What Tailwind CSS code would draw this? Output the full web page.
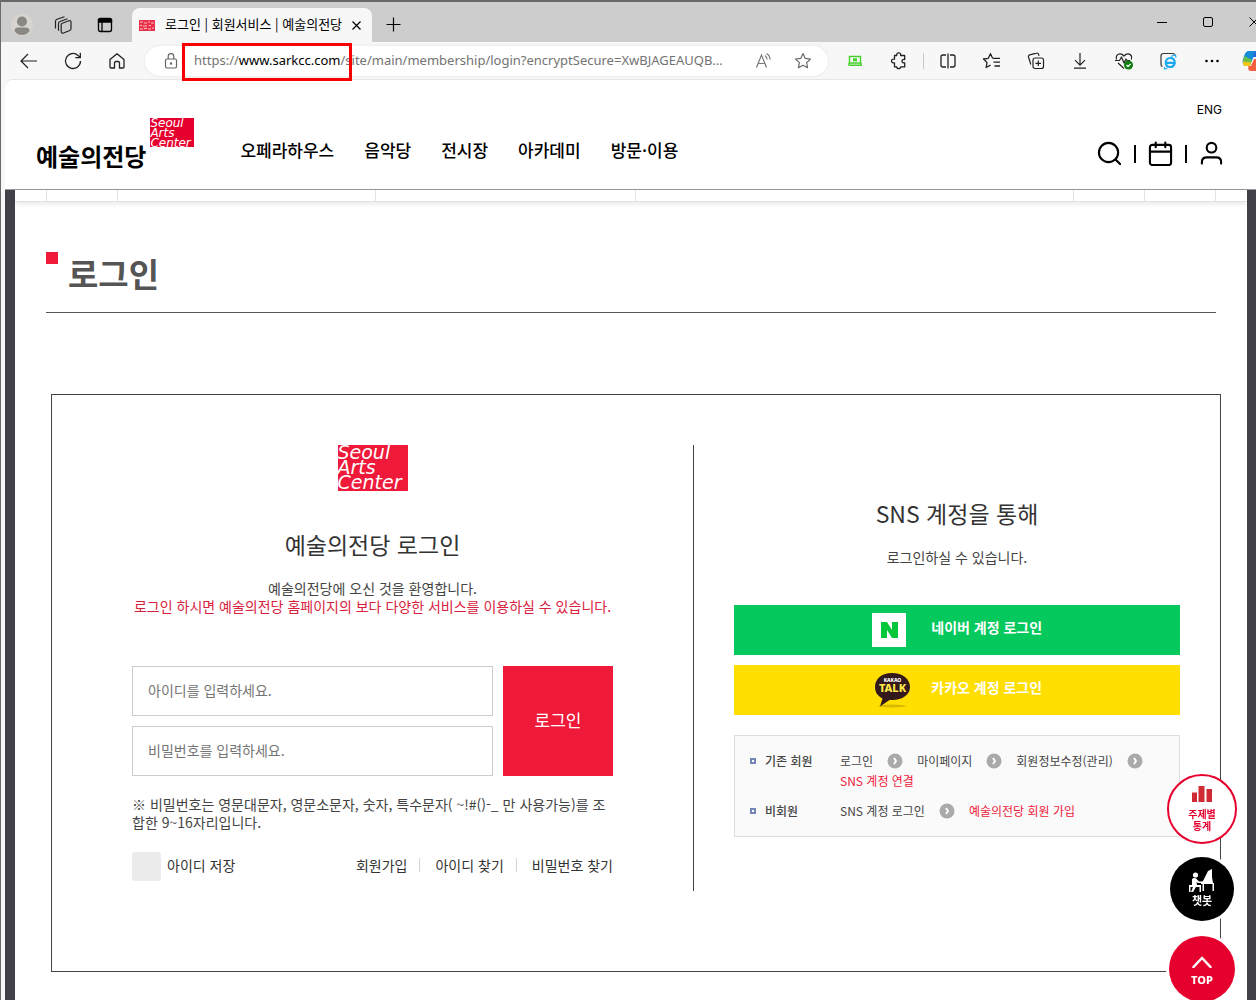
<!DOCTYPE html>
<html lang="ko">
<head>
<meta charset="utf-8">
<meta name="viewport" content="width=device-width, initial-scale=1">
<title>로그인 | 회원서비스 | 예술의전당</title>
<script src="https://cdn.jsdelivr.net/npm/@tailwindcss/browser@4"></script>
</head>
<body class="flex min-h-screen flex-col overflow-x-hidden border-l border-[#6b6b6b] bg-[#f7f7f7] font-['Noto_Sans_CJK_KR',sans-serif] text-[#333]">

<!-- Browser tab strip -->
<div class="flex h-[42px] shrink-0 items-end border-t-2 border-[#666b66] bg-[#cdcdcd] text-black">
  <div class="flex h-[34px] w-[131px] shrink-0 items-center gap-5 pl-[10px]">
    <svg class="size-[22px]" viewBox="0 0 22 22"><circle cx="11" cy="11" r="11" fill="#d8d5d0"/><circle cx="11" cy="7.500" r="5" fill="#8b8783"/><path d="M3.500 17c0-3 2-3.500 4-3.500h7c2 0 4 .5 4 3.500-2 3-5 4-7.500 4s-5.500-1-7.500-4z" fill="#8b8783"/></svg>
    <svg class="size-5" viewBox="0 0 20 20" fill="none" stroke="#222" stroke-width="1.200" stroke-linejoin="round"><path d="M9.200 8.200l6.800-2.500c1-.3 2 .3 2 1.300v6.500c0 1-.5 1.700-1.300 2L10.500 18c-1.200.4-2.300-.2-2.300-1.400v-7c0-.7.4-1.200 1-1.400zM5.500 15.800V8.500c0-1 .6-1.700 1.500-2l7.500-2.800M2.500 13.500V6.300c0-1 .6-1.700 1.500-2L11.500 1.800"/></svg>
    <svg class="ml-[2px] size-5" viewBox="0 0 20 20" fill="none" stroke="#000" stroke-width="1.300"><rect x="3.500" y="3.500" width="13" height="13" rx="2"/><path d="M3.500 4.500h13v2.500h-13z" fill="#000"/><path d="M7 7v9.500"/></svg>
  </div>
  <div class="flex h-[34px] w-60 shrink-0 items-center rounded-t-lg bg-[#f7f7f7] pr-[10px] pl-[7px]">
    <svg class="h-[11px] w-4 shrink-0" viewBox="0 0 16 11"><rect width="16" height="11" fill="#e93048"/><path d="M1 2h3M5 3h3M9 2h2M12 3h3M1 5.500h2M4 6h4M10 5.500h2M1 9h3M5 8.500h3M9 9h3M13 8h2" stroke="#fff" stroke-opacity=".7"/></svg>
    <span class="ml-[10px] flex-1 pb-[2px] text-[13px] whitespace-nowrap">로그인 | 회원서비스 | 예술의전당</span>
    <button aria-label="탭 닫기"><svg class="size-[11px]" viewBox="0 0 11 11" stroke="#000" stroke-width="1.200"><path d="M1.500 1.500l8 8M9.500 1.500l-8 8"/></svg></button>
  </div>
  <button aria-label="새 탭" class="mb-[10px] ml-[14px]"><svg class="size-[15px]" viewBox="0 0 15 15" stroke="#000" stroke-width="1.200"><path d="M.5 7.500h14M7.500.5v14"/></svg></button>
  <div class="-mr-1 mb-[14px] ml-auto flex shrink-0 items-center gap-[34px]">
    <button aria-label="최소화"><svg class="size-3" viewBox="0 0 12 12"><path d="M1 6.500h10" stroke="#000"/></svg></button>
    <button aria-label="최대화"><svg class="size-3" viewBox="0 0 12 12"><rect x="1.500" y="1.500" width="9" height="9" rx="1.500" fill="none" stroke="#000"/></svg></button>
    <button aria-label="닫기"><svg class="size-3" viewBox="0 0 12 12" stroke="#000"><path d="M1.500 1.500l9 9M10.500 1.500l-9 9"/></svg></button>
  </div>
</div>

<!-- Address bar -->
<div class="flex h-[37px] shrink-0 items-center text-[#222]">
  <div class="flex w-36 shrink-0 items-center gap-6 pl-[18px]">
    <button aria-label="뒤로"><svg class="size-5" viewBox="0 0 20 20" fill="none" stroke="#222" stroke-width="1.200"><path d="M18 10H2.500M9 3l-7 7 7 7"/></svg></button>
    <button aria-label="새로 고침"><svg class="size-5" viewBox="0 0 20 20" fill="none" stroke="#222" stroke-width="1.300"><path d="M17.500 10a7.500 7.500 0 1 1-2.500-5.600L17 6.500M17.300 1.800v4.900h-5"/></svg></button>
    <button aria-label="홈"><svg class="size-5" viewBox="0 0 20 20" fill="none" stroke="#222" stroke-width="1.300" stroke-linejoin="round"><path d="M3 8.500L10 2.800l7 5.700v7.500c0 .6-.4 1-1 1h-3.500v-5c0-1-.6-1.500-1.500-1.500H9c-.9 0-1.500.5-1.500 1.500v5H4c-.6 0-1-.4-1-1z"/></svg></button>
  </div>
  <div class="relative flex h-[30px] w-[683px] shrink-0 items-center rounded-full bg-white pr-4 pl-[18px] shadow-[0_0_3px_#00000018]">
    <svg class="h-4 w-4 shrink-0" viewBox="0 0 16 16" fill="none" stroke="#666" stroke-width="1.200"><rect x="2.500" y="6" width="11" height="9" rx="1.500"/><path d="M5.200 6V3.500a2.800 2.800 0 0 1 5.600 0V6"/><circle cx="8" cy="10.500" r=".6" fill="#666"/></svg>
    <span class="ml-[15px] flex-1 font-['Noto_Sans',sans-serif] text-[13px] whitespace-nowrap text-[#737373]">https://<span class="text-black">www.sarkcc.com</span>/site/main/membership/login?encryptSecure=XwBJAGEAUQB...</span>
    <button aria-label="소리내어 읽기"><svg class="size-[18px]" viewBox="0 0 18 18" fill="none" stroke="#777" stroke-width="1.200"><path d="M1.500 15.500L6.500 3l5 12.500M3.200 11.500h6.600M10 3.500c1.500 1 2 2.200 2 4M11.500 1.500c2.500 1.500 3.500 3.500 3.500 6"/></svg></button>
    <button aria-label="즐겨찾기에 추가" class="ml-[21px]"><svg class="size-[18px]" viewBox="0 0 20 20" fill="none" stroke="#666" stroke-width="1.300" stroke-linejoin="round"><path d="M10 1.800l2.500 5.300 5.800.7-4.300 4 1.100 5.700L10 14.700l-5.100 2.800L6 11.800l-4.300-4 5.800-.7z"/></svg></button>
    <div class="absolute -top-[3px] left-[37px] h-[38px] w-[170px] border-[3px] border-[#f80000]"></div>
  </div>
  <div class="ml-[17px] flex shrink-0 items-center">
    <button aria-label="화면 캡처" class="mr-6"><svg class="size-5" viewBox="0 0 20 20" fill="none" stroke="#45d02c" stroke-width="1.400"><path d="M4.500 5.500h11v6.500h-11zM3.800 14.300h12.400V12M3.800 14.300V12"/><path d="M8 7.300h4v3H8z" fill="#45d02c" stroke="none"/></svg></button>
    <button aria-label="확장" class="mr-[14px]"><svg class="size-5" viewBox="0 0 20 20" fill="none" stroke="#222" stroke-width="1.300" stroke-linejoin="round"><path d="M5.500 4.500h2.200c-.2-2 .8-2.700 2-2.700s2.200.7 2 2.700h4v4c-2-.3-2.700.6-2.700 1.700s.7 2 2.700 1.700v4h-4c.2 1-.8 1.700-2 1.700s-2.200-.7-2-1.700H5.500v-4C3.500 12 2.500 11.300 2.500 10s1-2 3-1.800z"/></svg></button>
    <span class="mr-[14px] h-4 w-px bg-[#c8c8c8]"></span>
    <button aria-label="분할 화면" class="mr-6"><svg class="size-5" viewBox="0 0 20 20" fill="none" stroke="#222" stroke-width="1.300"><path d="M8 4H5a2 2 0 0 0-2 2v8c0 1.100.9 2 2 2h3M12 4h3a2 2 0 0 1 2 2v8a2 2 0 0 1-2 2h-3M10 2.500v15"/></svg></button>
    <button aria-label="즐겨찾기" class="mr-6"><svg class="size-5" viewBox="0 0 20 20" fill="none" stroke="#222" stroke-width="1.300" stroke-linejoin="round"><path d="M10.500 7L8.500 2.700 6.300 7.300l-4.800.7L5 11.500l-.9 5 4.400-2.300M10.500 7.300h7.500M11.500 11.200H18M12.500 15H18"/></svg></button>
    <button aria-label="컬렉션" class="mr-6"><svg class="size-5" viewBox="0 0 20 20" fill="none" stroke="#222" stroke-width="1.200"><rect x="7" y="7" width="10.500" height="10.500" rx="2"/><path d="M12.300 9.500v5.500M9.500 12.300h5.500M4.800 13.500L2.500 6c-.3-1 .2-1.800 1.200-2.100l6.800-1.800c1-.3 1.700.1 2 1l.5 1.700"/></svg></button>
    <button aria-label="다운로드" class="mr-6"><svg class="size-5" viewBox="0 0 20 20" fill="none" stroke="#222" stroke-width="1.200"><path d="M10 2v12M5 9.200l5 5 5-5M4 17.200h12"/></svg></button>
    <button aria-label="브라우저 필수 사항" class="mr-6"><svg class="size-5" viewBox="0 0 20 20" fill="none" stroke="#222" stroke-width="1.200" stroke-linejoin="round"><path d="M2.500 8.500C1.500 5 3.500 2.800 6 2.800c1.800 0 3 1 4 2.200 1-1.200 2.200-2.200 4-2.200 3 0 4.500 3 3.300 5.700M1 9.500h4.500l2-3.500 2.500 6 2-4 1 1.500h3M4 12l6 5.500"/><circle cx="14.500" cy="14" r="4.500" fill="#107c10" stroke="none"/><path d="M12.500 14l1.500 1.500 2.700-2.700" stroke="#fff"/></svg></button>
    <button aria-label="IE 모드" class="mr-6"><svg class="size-5" viewBox="0 0 20 20" fill="none"><path d="M4.500 15.500c-1.300 0-1.500-1-1.500-2V5c0-1.500.8-2.500 2.500-2.500h9c1.500 0 2.500.8 2.500 2" stroke="#333" stroke-width="1.200"/><path d="M16.500 12.800c-.7 2-2.200 3.200-4.200 3.200-2.800 0-4.500-1.900-4.500-4.500s1.800-4.500 4.500-4.500 4.400 1.900 4.400 4.800H8" stroke="#1eaaf1" stroke-width="2.200"/><path d="M7 16c-2 2.500 0 2.500 2.500 1M13 5.500c3-2 5.500-2 4.700 1" stroke="#1eaaf1" stroke-width="1.200"/></svg></button>
    <button aria-label="더 보기" class="mr-5"><svg class="size-5" viewBox="0 0 20 20"><circle cx="4.500" cy="10" r="1.300"/><circle cx="10" cy="10" r="1.300"/><circle cx="15.500" cy="10" r="1.300"/></svg></button>
    <button aria-label="Copilot"><svg class="h-5 w-6" viewBox="0 0 24 20"><path d="M7 0h8l-3 5-4 9H4c-4 0-4-3-2.500-7C3 2 4 0 7 0z" fill="#168bd8"/><path d="M2.500 5L10 9l-2 6H4c-4 0-3.500-4-1.500-10z" fill="#6abf4b"/><path d="M1 10.500l8 1L8 15H4c-2.500 0-3.500-2-3-4.500z" fill="#f5c518"/><path d="M12 8h6l-4 12H9c-3 0-3-2-2.500-5H9z" fill="#f2603f"/><path d="M13 0h2c3 0 3 4 4 6h-8z" fill="#2467d6"/></svg></button>
  </div>
</div>

<!-- Page viewport -->
<div class="ml-1 flex flex-1 flex-col rounded-tl-lg border-t border-[#e6e6e6] bg-white">
  <header class="flex h-[110px] shrink-0 border-b border-[#999] text-black">
    <a href="#" aria-label="예술의전당 홈" class="mt-[38px] ml-[31px] flex shrink-0 items-start">
      <span class="mt-6 text-2xl leading-7 font-bold">예술의전당</span>
      <span class="ml-1 h-[29px] w-11 overflow-hidden bg-[#e6002d] font-['DejaVu_Sans',sans-serif] text-xs leading-[10px] text-white italic">Seoul<br>Arts<br>Center</span>
    </a>
    <nav class="mt-[58px] ml-[46px] flex items-start gap-[30px] text-[17px] leading-6 font-medium whitespace-nowrap">
      <a href="#">오페라하우스</a><a href="#">음악당</a><a href="#">전시장</a><a href="#">아카데미</a><a href="#">방문·이용</a>
    </nav>
    <div class="mr-8 ml-auto flex flex-col items-end pt-[22px]">
      <a href="#" class="mr-[2px] font-[Inter,sans-serif] text-xs leading-4">ENG</a>
      <div class="mt-[23px] flex items-center gap-3">
        <button aria-label="검색"><svg class="size-[25px]" viewBox="0 0 26 26" fill="none" stroke="#000" stroke-width="2.200" stroke-linecap="round"><circle cx="12" cy="12" r="10"/><path d="M19.500 19.500l4.500 4.500"/></svg></button>
        <span class="h-[18px] w-[2px] bg-black"></span>
        <button aria-label="일정"><svg class="size-[25px]" viewBox="0 0 26 26" fill="none" stroke="#000" stroke-width="2.200" stroke-linecap="round"><rect x="2" y="4" width="22" height="21" rx="2.500"/><path d="M2 11h22M8 1.500v5M18 1.500v5"/></svg></button>
        <span class="h-[18px] w-[2px] bg-black"></span>
        <button aria-label="내 정보"><svg class="size-[25px]" viewBox="0 0 26 26" fill="none" stroke="#000" stroke-width="2.200" stroke-linecap="round"><circle cx="13" cy="7" r="5"/><path d="M3 23.500V22c0-3 2-5 5-5h10c3 0 5 2 5 5v1.500"/></svg></button>
      </div>
    </div>
  </header>

  <div class="flex flex-1 flex-col border-r-[9px] border-l-[10px] border-[#424149]">
    <div class="flex h-3 shrink-0 border-b border-[#e2e2e2] px-[31px] shadow-[0_2px_5px_#00000018]">
      <span class="w-[71px] border-l border-[#e2e2e2]"></span>
      <span class="w-[258px] border-l border-[#e2e2e2]"></span>
      <span class="w-[260px] border-l border-[#e2e2e2]"></span>
      <span class="flex-1 border-l border-[#e2e2e2]"></span>
      <span class="w-[71px] border-l border-[#e2e2e2]"></span>
      <span class="w-[72px] border-x border-[#e2e2e2]"></span>
    </div>

    <main class="mx-[31px]">
      <div class="mt-[50px] flex h-[61px] items-start gap-[10px] border-b border-[#555]">
        <span class="size-3 bg-[#ef1a3a]"></span>
        <h1 class="text-[33px] leading-[42px] font-bold text-[#555]">로그인</h1>
      </div>

      <div class="mt-[81px] -mr-[5px] ml-[5px] grid grid-cols-[641fr_527fr] border border-[#444] pt-[50px] pb-20">
        <section class="px-20 pb-[10px] text-sm leading-[18px]">
          <div class="mx-auto h-[46px] w-[70px] overflow-hidden bg-[#ef193a] font-['DejaVu_Sans',sans-serif] text-[19px] leading-[15px] text-white italic">Seoul<br>Arts<br>Center</div>
          <h2 class="mt-[38px] text-center text-[23px] leading-[30px]">예술의전당 로그인</h2>
          <p class="mt-5 text-center whitespace-nowrap text-[#444]">예술의전당에 오신 것을 환영합니다.<br><span class="text-[#d8213d]">로그인 하시면 예술의전당 홈페이지의 보다 다양한 서비스를 이용하실 수 있습니다.</span></p>
          <form class="mt-[51px]">
            <div class="flex gap-[10px]">
              <div class="flex flex-1 flex-col gap-[10px]">
                <input type="text" aria-label="아이디" placeholder="아이디를 입력하세요." class="h-[50px] w-full border border-[#ccc] px-[15px] pb-[2px] placeholder:text-[#757575]">
                <input type="password" aria-label="비밀번호" placeholder="비밀번호를 입력하세요." class="h-[50px] w-full border border-[#ccc] px-[15px] pb-[2px] placeholder:text-[#757575]">
              </div>
              <button type="button" class="w-[110px] bg-[#ef193a] pb-[2px] text-[17px] text-white">로그인</button>
            </div>
            <p class="mt-[19px] text-[#444]">※ 비밀번호는 영문대문자, 영문소문자, 숫자, 특수문자( ~!#()-_ 만 사용가능)를 조합한 9~16자리입니다.</p>
            <div class="mt-[21px] flex items-start justify-between leading-[26px]">
              <label class="flex items-start gap-[6px]"><input type="checkbox" class="size-[29px] appearance-none rounded-[3px] bg-[#ececec] checked:bg-[#ef193a]">아이디 저장</label>
              <div class="flex items-center gap-3">
                <a href="#">회원가입</a><span class="h-[14px] w-px bg-[#d5d5d5]"></span>
                <a href="#" class="ml-[3px]">아이디 찾기</a><span class="h-[14px] w-px bg-[#d5d5d5]"></span>
                <a href="#" class="ml-[3px]">비밀번호 찾기</a>
              </div>
            </div>
          </form>
        </section>

        <section class="border-l border-[#444] px-10 pt-[53px]">
          <h2 class="text-center text-[23px] leading-[30px]">SNS 계정을 통해</h2>
          <p class="mt-5 text-center text-sm leading-[18px] text-[#444]">로그인하실 수 있습니다.</p>
          <div class="mt-[39px] flex flex-col gap-[10px] text-sm leading-[18px] font-bold text-white">
            <button class="flex h-[50px] items-center bg-[#05c95d] pb-[6px] pl-[31%]">
              <svg class="mt-[6px] h-[34px] w-[34px]" viewBox="0 0 34 34"><rect width="34" height="34" fill="#fff"/><path d="M9 9h6l5 8V9h6v16h-6l-5-8v8H9z" fill="#05c73c"/></svg>
              <span class="ml-[25px]">네이버 계정 로그인</span>
            </button>
            <button class="flex h-[50px] items-center bg-[#ffde00] pb-[6px] pl-[31%]">
              <svg class="mt-[6px] h-[36px] w-[38px]" viewBox="0 0 38 36"><ellipse cx="20" cy="34" rx="14" ry="1.500" fill="#d8b800"/><path d="M20 1C9.500 1 3 7 3 15c0 5 2.500 9 7.500 11.500L8 34.500l9.500-6.500c12 1 20.500-5 20.500-13C38 7 30.500 1 20 1z" fill="#33191b"/><text x="20.500" y="9.500" fill="#fff" font-family="Noto Sans, sans-serif" font-size="5" font-weight="800" text-anchor="middle">KAKAO</text><text x="20.500" y="20" fill="#ffe94a" font-family="Noto Sans, sans-serif" font-size="11" font-weight="800" text-anchor="middle">TALK</text></svg>
              <span class="ml-[21px]">카카오 계정 로그인</span>
            </button>
          </div>
          <dl class="mt-5 grid grid-cols-[90px_1fr] gap-y-[10px] border border-[#ddd] bg-[#fafafa] px-[15px] py-[15px] text-xs leading-5 whitespace-nowrap text-[#444]">
            <dt class="flex h-5 items-center gap-[9px] font-medium"><span class="size-[6px] border-2 border-[#7388b5] bg-white"></span>기존 회원</dt>
            <dd>
              <div class="flex items-center gap-[14px]">
                <span>로그인</span>
                <svg class="size-4" viewBox="0 0 16 16"><circle cx="8" cy="8" r="7.500" fill="#aaa"/><path d="M7 5l2 3-2 3" stroke="#fff" stroke-width="1.800" fill="none"/></svg>
                <span>마이페이지</span>
                <svg class="size-4" viewBox="0 0 16 16"><circle cx="8" cy="8" r="7.500" fill="#aaa"/><path d="M7 5l2 3-2 3" stroke="#fff" stroke-width="1.800" fill="none"/></svg>
                <span>회원정보수정(관리)</span>
                <svg class="size-4" viewBox="0 0 16 16"><circle cx="8" cy="8" r="7.500" fill="#aaa"/><path d="M7 5l2 3-2 3" stroke="#fff" stroke-width="1.800" fill="none"/></svg>
              </div>
              <div class="text-[#ef193a]">SNS 계정 연결</div>
            </dd>
            <dt class="flex h-5 items-center gap-[9px] font-medium"><span class="size-[6px] border-2 border-[#7388b5] bg-white"></span>비회원</dt>
            <dd class="flex items-center gap-[14px]">
              <span>SNS 계정 로그인</span>
              <svg class="size-4" viewBox="0 0 16 16"><circle cx="8" cy="8" r="7.500" fill="#aaa"/><path d="M7 5l2 3-2 3" stroke="#fff" stroke-width="1.800" fill="none"/></svg>
              <span class="text-[#ef193a]">예술의전당 회원 가입</span>
            </dd>
          </dl>
        </section>
      </div>
    </main>
  </div>
</div>

<!-- Floating quick menu -->
<div class="fixed right-[19px] -bottom-[2px] flex w-[70px] flex-col items-center text-center">
  <a href="#" class="flex size-[70px] flex-col items-center rounded-full border-2 border-[#e6002d] bg-white pt-[10px] text-[10px] leading-3 font-bold text-[#e6002d]">
    <svg class="mb-[6px] h-4 w-5" viewBox="0 0 20 16" fill="#d02b35"><path d="M0 6.500h5V16H0zM6.500 0h6v16h-6zM14.500 3h5.500v13h-5.500z"/></svg>
    주제별<br>통계
  </a>
  <a href="#" class="mt-[13px] flex size-16 flex-col items-center rounded-full bg-black pt-3 text-[11px] leading-3 font-bold text-white ring-3 ring-white">
    <svg class="mb-px h-6 w-[26px]" viewBox="0 0 26 24" fill="#fff"><circle cx="6.500" cy="6" r="2.600"/><path d="M3 10c2-1.500 4-1 5 .5l2 2h4v1.500H9L7.500 13l.5 3h4v7h-1.500v-5H7l-3 5H2l2-5H1.500v5H0v-7h3z"/><path d="M13 14L19 2l4-2v8l1 6h1v8h-1.500v-7H15v7h-1.500v-7H12v-3z"/></svg>
    챗봇
  </a>
  <a href="#" class="mt-[15px] flex size-[66px] flex-col items-center rounded-full bg-[#e6002d] pt-5 font-['Noto_Sans',sans-serif] text-[11px] leading-4 font-extrabold text-white ring-3 ring-white">
    <svg class="h-3 w-5" viewBox="0 0 20 12" fill="none" stroke="#fff" stroke-width="2.500" stroke-linecap="round"><path d="M1.500 11L10 2l8.500 9"/></svg>
    <span class="mt-1">TOP</span>
  </a>
</div>
</body>
</html>
